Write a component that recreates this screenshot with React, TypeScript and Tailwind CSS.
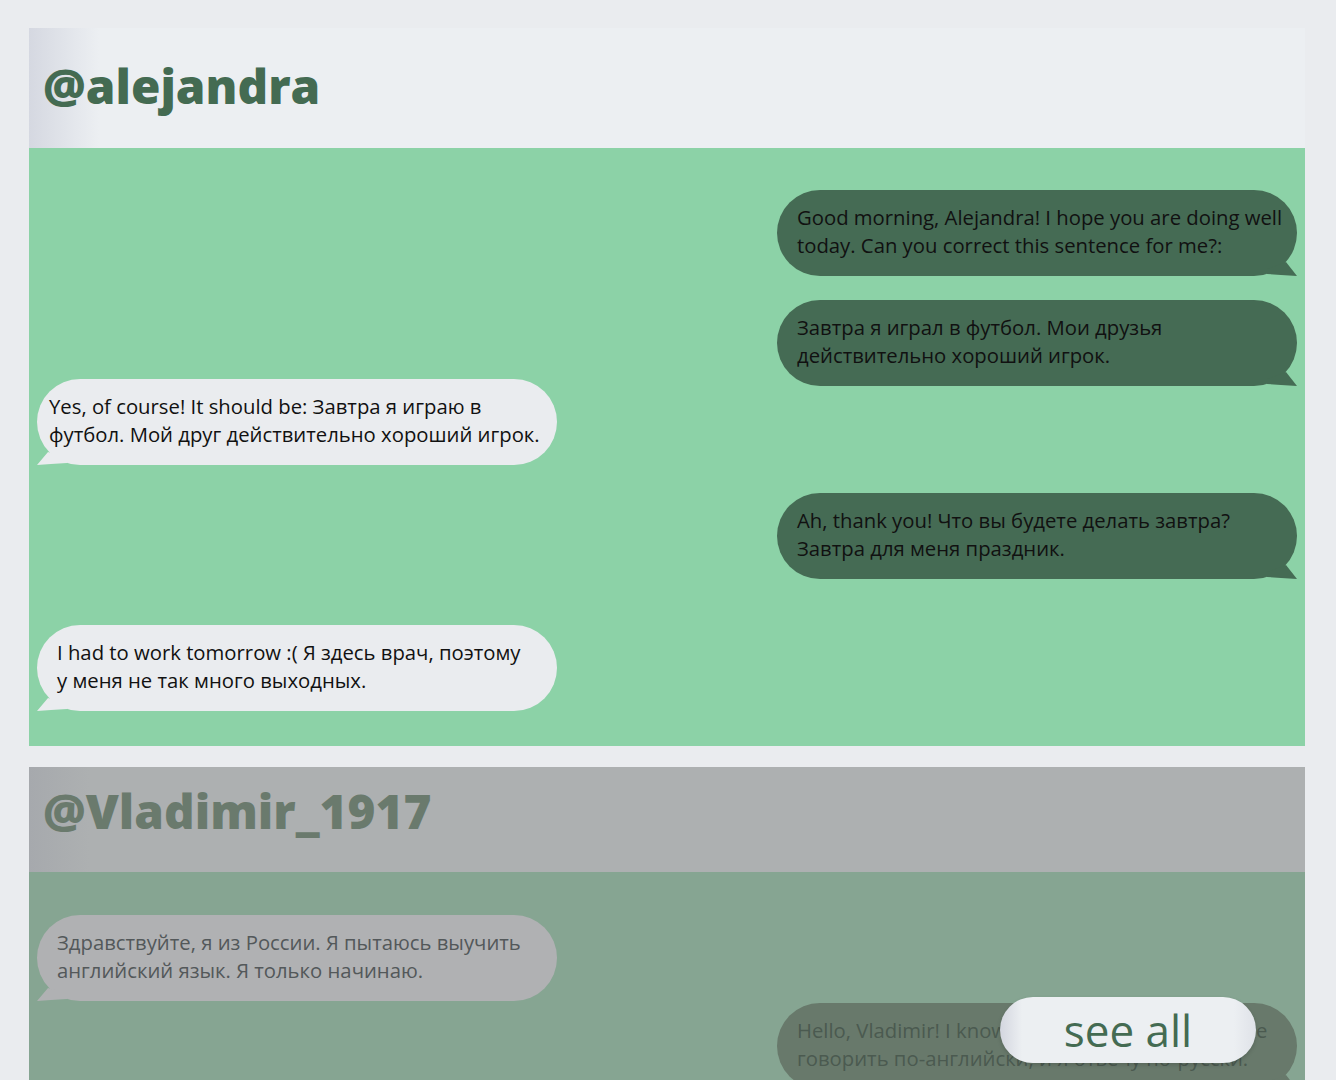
import React from "react";

type Msg = {
  id: number;
  side: "left" | "right";
  lines: string[];
  mt: string;
  pl?: string;
};

const chats = [
  {
    id: 1,
    user: "@alejandra",
    faded: false,
    messages: [
      {
        id: 1,
        side: "right",
        lines: ["Good morning, Alejandra! I hope you are doing well", "today. Can you correct this sentence for me?:"],
        mt: "mt-0",
      },
      {
        id: 2,
        side: "right",
        lines: ["Завтра я играл в футбол. Мои друзья", "действительно хороший игрок."],
        mt: "mt-[24px]",
      },
      {
        id: 3,
        side: "left",
        lines: ["Yes, of course! It should be: Завтра я играю в", "футбол. Мой друг действительно хороший игрок."],
        mt: "mt-[-7px]",
        pl: "pl-[12px]",
      },
      {
        id: 4,
        side: "right",
        lines: ["Ah, thank you! Что вы будете делать завтра?", "Завтра для меня праздник."],
        mt: "mt-[28px]",
      },
      {
        id: 5,
        side: "left",
        lines: ["I had to work tomorrow :( Я здесь врач, поэтому", "у меня не так много выходных."],
        mt: "mt-[46px]",
      },
    ] as Msg[],
  },
  {
    id: 2,
    user: "@Vladimir_1917",
    faded: true,
    messages: [
      {
        id: 1,
        side: "left",
        lines: ["Здравствуйте, я из России. Я пытаюсь выучить", "английский язык. Я только начинаю."],
        mt: "mt-0",
      },
      {
        id: 2,
        side: "right",
        lines: ["Hello, Vladimir! I know a little Russian. Вы можете", "говорить по-английски, и я отвечу по-русски."],
        mt: "mt-[2px]",
      },
    ] as Msg[],
  },
];

const Bubble = ({ msg, faded }: { msg: Msg; faded: boolean }) => {
  const right = msg.side === "right";
  const bg = right
    ? faded
      ? "bg-[#68796b] text-[#4b5a50]"
      : "bg-[#456b54] text-[#111]"
    : faded
      ? "bg-[#b0b1b3] text-[#53585a]"
      : "bg-[#eaecef] text-[#111]";
  const fill = right ? (faded ? "#68796b" : "#456b54") : faded ? "#b0b1b3" : "#eaecef";

  return (
    <div className={`relative w-[520px] ${msg.mt} ${right ? "self-end" : "self-start"}`}>
      <div
        className={`rounded-[43px] ${bg} ${msg.pl ?? "pl-[20px]"} pr-3 pt-[13px] pb-[17px] text-[20.3px] leading-[28px]`}
      >
        {msg.lines.map((l, i) => (
          <div key={i} className="whitespace-nowrap">
            {l}
          </div>
        ))}
      </div>
      {right ? (
        <svg className="absolute right-0 bottom-0" width="30" height="16" viewBox="0 0 30 16">
          <polygon points="0,9 19,2 30,16 14,15 0,14" fill={fill} />
        </svg>
      ) : (
        <svg className="absolute left-0 bottom-0" width="30" height="16" viewBox="0 0 30 16">
          <polygon points="30,9 11,3 0,16 14,15 30,14" fill={fill} />
        </svg>
      )}
    </div>
  );
};

const App = () => {
  return (
    <div
      className="relative h-[1080px] overflow-hidden bg-[#eaecef] pt-[28px]"
      style={{ fontFamily: "'Open Sans', 'Noto Sans', sans-serif" }}
    >
      {chats.map((chat) => (
        <div key={chat.id} className={`ml-[29px] w-[1276px] ${chat.faded ? "mt-[21px]" : ""}`}>
          <div
            className={
              chat.faded
                ? "h-[105px] bg-[linear-gradient(to_right,#a6a9ad,#adb0b1_60px)] pl-[14px] pt-[20px]"
                : "h-[120px] bg-[linear-gradient(to_right,#d5d8e1,#eceff2_70px)] pl-[14px] pt-[34px]"
            }
          >
            <h2
              className={`text-[47.7px] font-extrabold leading-none ${
                chat.faded ? "text-[#6a7a6d]" : "text-[#446b52]"
              }`}
            >
              {chat.user}
            </h2>
          </div>
          <div
            className={`flex flex-col px-2 ${
              chat.faded ? "bg-[#86a592] pt-[43px] pb-10" : "bg-[#8cd2a7] pt-[42px] pb-[35px]"
            }`}
          >
            {chat.messages.map((m) => (
              <Bubble key={m.id} msg={m} faded={chat.faded} />
            ))}
          </div>
        </div>
      ))}

      <button className="absolute left-[1000px] top-[997px] flex h-[66px] w-[256px] items-center justify-center rounded-[40px] bg-[linear-gradient(to_right,#d3d6df,#eceff2_22px,#eceff2_234px,#dfe2e8)] text-[44px] leading-none text-[#446b52] shadow-[0_2px_4px_rgba(0,0,0,0.15)]">
        see all
      </button>
    </div>
  );
};

export default App;
